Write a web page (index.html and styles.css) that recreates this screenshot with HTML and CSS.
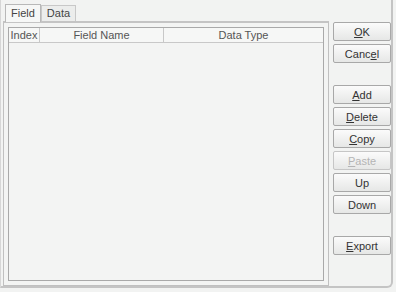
FILE: index.html
```html
<!DOCTYPE html>
<html lang="en">
<head>
  <meta charset="UTF-8">
  <title>Fields</title>
  <link rel="stylesheet" href="styles.css">
</head>
<body>
  <div class="janela">
    <div class="esquerda">
      <div class="abas">
        <div class="aba ativa">Field</div>
        <div class="aba">Data</div>
      </div>
      <div class="painel">
        <div class="tabela">
          <table>
            <thead>
              <tr>
                <th class="col-index">Index</th>
                <th class="col-nome">Field Name</th>
                <th>Data Type</th>
              </tr>
            </thead>
          </table>
        </div>
      </div>
    </div>

    <div class="botoes">
      <button class="botao"><u>O</u>K</button>
      <button class="botao">Canc<u>e</u>l</button>
      <div class="grupo">
        <button class="botao"><u>A</u>dd</button>
        <button class="botao"><u>D</u>elete</button>
        <button class="botao"><u>C</u>opy</button>
        <button class="botao" disabled><u>P</u>aste</button>
        <button class="botao">Up</button>
        <button class="botao">Down</button>
      </div>
      <button class="botao exportar"><u>E</u>xport</button>
    </div>
  </div>
</body>
</html>
```

FILE: styles.css
```css
body {
  margin: 0;
  background-color: #f2f3f2;
  font-family: 'Liberation Sans', Arial, sans-serif;
  font-size: 11px;
  color: #444;
}

.janela {
  width: 393px;
  height: 288px;
  box-sizing: border-box;
  border-left: 1px solid #d6d6d6;
  border-right: 2px solid #c4c4c4;
  border-bottom: 2px solid #c4c4c4;
  border-bottom-right-radius: 6px;
  display: flex;
  padding: 4px 0 0 2px;
}

.esquerda {
  width: 327px;
  display: flex;
  flex-direction: column;
}

.abas {
  display: flex;
  padding-left: 2px;
  height: 17px;
}

.aba {
  padding: 0 5px;
  border: 1px solid #c8c8c8;
  border-bottom: none;
  background-color: #ecedec;
  line-height: 15px;
  margin-top: 1px;
}

.aba.ativa {
  background-color: #f6f7f6;
  margin-top: 0;
  line-height: 16px;
  border-color: #b8b8b8;
  position: relative;
  z-index: 1;
  margin-bottom: -1px;
}

.painel {
  flex: 1;
  border: 1px solid #c0c0c0;
  border-top: 2px solid #c4c4c4;
  padding: 4px;
  display: flex;
  background-color: #f3f4f3;
}

.tabela {
  flex: 1;
  border: 1px solid #a9a9a9;
  background-color: #f3f4f3;
}

table {
  width: 100%;
  border-collapse: collapse;
}

th {
  height: 14px;
  padding: 0;
  font-weight: normal;
  color: #555;
  border: 1px solid #c8c8c8;
  border-top: none;
  background-color: #f6f7f6;
  text-align: center;
}

th:first-child {
  border-left: none;
}

th:last-child {
  border-right: none;
}

.col-index {
  width: 30px;
}

.col-nome {
  width: 123px;
}

.botoes {
  display: flex;
  flex-direction: column;
  margin-left: 4px;
  padding-top: 18px;
  gap: 3px;
}

.grupo {
  display: flex;
  flex-direction: column;
  gap: 3px;
  margin-top: 19px;
}

.botao {
  width: 58px;
  height: 19px;
  padding: 0;
  font-family: inherit;
  font-size: 11px;
  color: #333;
  border: 1px solid #a8a8a8;
  border-radius: 2px;
  background: linear-gradient(#fbfbfb, #e6e7e6);
}

.botao:disabled {
  color: #b4b4b4;
  border-color: #c6c6c6;
}

.exportar {
  margin-top: 19px;
}
```
